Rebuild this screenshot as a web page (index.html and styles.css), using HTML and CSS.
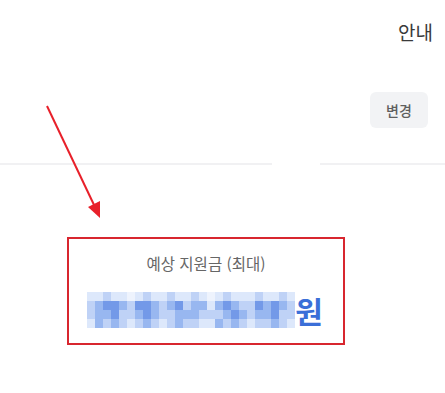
FILE: index.html
```html
<!DOCTYPE html>
<html lang="ko">
<head>
<meta charset="utf-8">
<link rel="stylesheet" href="styles.css">
</head>
<body>
<div class="page">
  <header class="top">
    <span class="guide">안내</span>
  </header>
  <div class="row">
    <button class="change">변경</button>
  </div>
  <div class="divider"><span class="seg left"></span><span class="seg right"></span></div>
  <section class="card">
    <div class="label">예상 지원금 (최대)</div>
    <div class="amount">
      <div class="mosaic">
        <i class="m1"></i><i class="m1"></i><i class="m2"></i><i class="m1"></i><i class="m1"></i><i class="m0"></i><i class="m1"></i><i class="m2"></i><i class="m1"></i><i class="m1"></i><i class="m2"></i><i class="m1"></i><i class="m1"></i><i class="m2"></i><i class="m1"></i><i class="m0"></i><i class="m1"></i><i class="m2"></i><i class="m1"></i><i class="m1"></i><i class="m1"></i><i class="m2"></i><i class="m1"></i><i class="m1"></i><i class="m2"></i><i class="m1"></i>
        <i class="m2"></i><i class="m3"></i><i class="m4"></i><i class="m4"></i><i class="m3"></i><i class="m2"></i><i class="m4"></i><i class="m4"></i><i class="m3"></i><i class="m2"></i><i class="m3"></i><i class="m4"></i><i class="m2"></i><i class="m3"></i><i class="m3"></i><i class="m1"></i><i class="m3"></i><i class="m4"></i><i class="m3"></i><i class="m2"></i><i class="m2"></i><i class="m4"></i><i class="m3"></i><i class="m4"></i><i class="m3"></i><i class="m2"></i>
        <i class="m2"></i><i class="m3"></i><i class="m3"></i><i class="m4"></i><i class="m2"></i><i class="m2"></i><i class="m3"></i><i class="m4"></i><i class="m3"></i><i class="m2"></i><i class="m2"></i><i class="m3"></i><i class="m3"></i><i class="m3"></i><i class="m2"></i><i class="m2"></i><i class="m2"></i><i class="m3"></i><i class="m4"></i><i class="m3"></i><i class="m2"></i><i class="m3"></i><i class="m3"></i><i class="m4"></i><i class="m2"></i><i class="m2"></i>
        <i class="m1"></i><i class="m3"></i><i class="m2"></i><i class="m3"></i><i class="m2"></i><i class="m1"></i><i class="m2"></i><i class="m3"></i><i class="m2"></i><i class="m1"></i><i class="m2"></i><i class="m3"></i><i class="m2"></i><i class="m2"></i><i class="m1"></i><i class="m1"></i><i class="m3"></i><i class="m2"></i><i class="m3"></i><i class="m2"></i><i class="m1"></i><i class="m2"></i><i class="m2"></i><i class="m3"></i><i class="m2"></i><i class="m1"></i>
      </div>
      <span class="won">원</span>
    </div>
  </section>
  <svg class="arrow" width="445" height="393" viewBox="0 0 445 393" aria-hidden="true">
    <line x1="47" y1="106" x2="95" y2="207" stroke="#e8202a" stroke-width="2"/>
    <polygon points="100,218 88,207 100,201" fill="#e8202a"/>
  </svg>
</div>
</body>
</html>
```

FILE: styles.css
```css
* { box-sizing: border-box; }
html, body { margin: 0; padding: 0; background: #fff; }
body {
  font-family: "Noto Sans CJK KR", "Noto Sans", sans-serif;
  width: 445px;
  height: 393px;
  overflow: hidden;
}
.page { position: relative; width: 445px; height: 393px; }
.top {
  height: 62px;
  display: flex;
  justify-content: flex-end;
  align-items: center;
  padding-right: 12px;
}
.guide { font-size: 19px; color: #3a3a3a; line-height: 1; }
.row {
  margin-top: 30px;
  display: flex;
  justify-content: flex-end;
  padding-right: 17px;
}
.change {
  width: 58px;
  height: 36px;
  border: 0;
  border-radius: 6px;
  background: #f2f3f5;
  color: #5f5f5f;
  font-family: inherit;
  font-size: 14px;
  font-weight: 500;
  padding: 0;
}
.divider {
  margin-top: 35px;
  display: flex;
  gap: 48px;
}
.seg { height: 2px; background: #f1f1f3; }
.seg.left { width: 272px; }
.seg.right { flex: 1; }
.card {
  margin-top: 72px;
  margin-left: 67px;
  width: 278px;
  height: 108px;
  border: 2px solid #d8262f;
  display: flex;
  flex-direction: column;
  align-items: center;
  padding-top: 13px;
}
.label {
  font-size: 15.5px;
  color: #666;
  line-height: 22px;
}
.amount {
  margin-top: 18px;
  display: flex;
  align-items: center;
  margin-left: -2px;
}
.mosaic {
  display: grid;
  grid-template-columns: repeat(26, 8px);
  grid-template-rows: repeat(4, 9px);
}
.mosaic i { display: block; }
.m0 { background: #eef3fd; }
.m1 { background: #dde8fb; }
.m2 { background: #bfd2f6; }
.m3 { background: #98b7f0; }
.m4 { background: #7399e8; }
.won {
  font-size: 30px;
  font-weight: 700;
  color: #3b6fd8;
  line-height: 36px;
}
.arrow { position: absolute; left: 0; top: 0; pointer-events: none; }
```
